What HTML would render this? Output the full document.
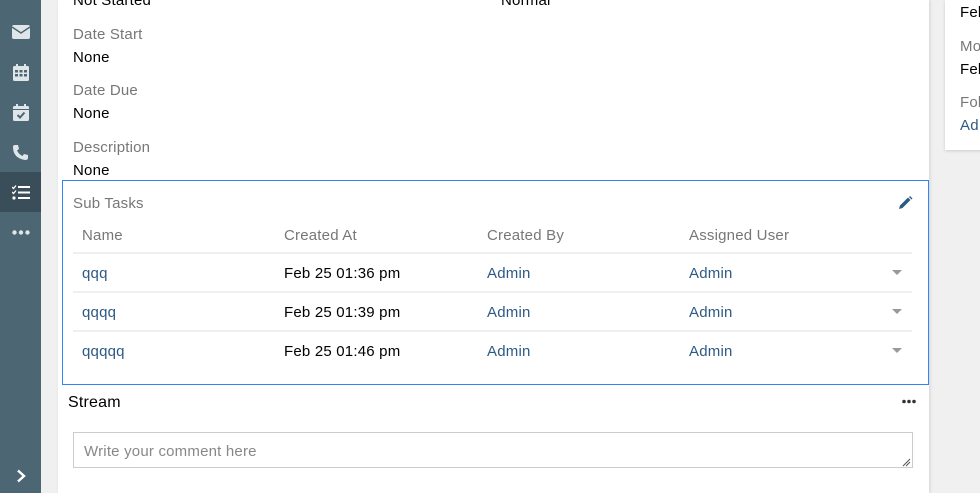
<!DOCTYPE html>
<html><head><style>
*{margin:0;padding:0;box-sizing:border-box}
html,body{width:980px;height:493px;overflow:hidden}
body{background:#f0f0f0;font-family:"Liberation Sans",sans-serif;font-size:15px;color:#000;position:relative;letter-spacing:0.2px}
.sb{position:absolute;left:0;top:0;width:41px;height:493px;background:#4d6674}
.sb .it{position:absolute;left:0;width:41px;height:40px;display:flex;align-items:center;justify-content:center}
.sb .act{background:#3a4e59}
.main{position:absolute;left:58px;top:0;width:871px;height:493px;background:#fff;box-shadow:1px 0 3px rgba(0,0,0,.12)}
.rp{position:absolute;left:945px;top:0;width:40px;height:150px;background:#fff;box-shadow:0 1px 3px rgba(0,0,0,.15)}
.t{position:absolute;white-space:nowrap}
.lbl{color:#777}
.lnk{color:#2d5a85}
.box{position:absolute;left:62px;top:180px;width:867px;height:205px;border:1.5px solid #2f86f2}
.line{position:absolute;left:73px;width:839px;height:2px;background:#eef0f0}
.car{position:absolute;left:892px;width:0;height:0;border-left:5px solid transparent;border-right:5px solid transparent;border-top:5px solid #999}
</style></head><body>
<div class="sb">
 <div class="it" style="top:12px"><svg width="18" height="14" viewBox="0 0 18 14"><rect width="18" height="14" rx="2" fill="#dfe6ea"/><path d="M0 2 L9 8 L18 2" stroke="#4d6674" stroke-width="1.5" fill="none"/></svg></div>
 <div class="it" style="top:52px"><svg width="16" height="17" viewBox="0 0 16 17"><rect x="0" y="2" width="16" height="15" rx="1.5" fill="#dfe6ea"/><rect x="3" y="0" width="2" height="4" fill="#dfe6ea"/><rect x="11" y="0" width="2" height="4" fill="#dfe6ea"/><g fill="#4d6674"><rect x="2" y="6" width="3" height="2.5"/><rect x="6.5" y="6" width="3" height="2.5"/><rect x="11" y="6" width="3" height="2.5"/><rect x="2" y="10" width="3" height="2.5"/><rect x="6.5" y="10" width="3" height="2.5"/><rect x="11" y="10" width="3" height="2.5"/></g></svg></div>
 <div class="it" style="top:92px"><svg width="16" height="17" viewBox="0 0 16 17"><rect x="0" y="2" width="16" height="15" rx="1.5" fill="#dfe6ea"/><rect x="3" y="0" width="2" height="4" fill="#dfe6ea"/><rect x="11" y="0" width="2" height="4" fill="#dfe6ea"/><rect x="0" y="5" width="16" height="1" fill="#4d6674"/><path d="M4.5 11 L7 13.5 L11.5 8.5" stroke="#4d6674" stroke-width="2" fill="none"/></svg></div>
 <div class="it" style="top:132px"><svg width="17" height="17" viewBox="0 0 17 17"><path d="M3 1 L6 1 L7 5 L5 6.5 Q7 10.5 10.5 12 L12 10 L16 11 L16 14 Q16 16 13 16 Q1 14 1 3 Q1 1 3 1Z" fill="#dfe6ea"/></svg></div>
 <div class="it act" style="top:172px"><svg width="18" height="15" viewBox="0 0 18 15"><g fill="#fff"><path d="M0 2 L1.5 3.5 L4 0.5" stroke="#fff" stroke-width="1.3" fill="none"/><path d="M0 7 L1.5 8.5 L4 5.5" stroke="#fff" stroke-width="1.3" fill="none"/><circle cx="2" cy="13" r="1.6"/><rect x="6" y="1" width="12" height="2"/><rect x="6" y="6.5" width="12" height="2"/><rect x="6" y="12" width="12" height="2"/></g></svg></div>
 <div class="it" style="top:212px"><svg width="18" height="5"><circle cx="2.5" cy="2.5" r="2.2" fill="#dfe6ea"/><circle cx="9" cy="2.5" r="2.2" fill="#dfe6ea"/><circle cx="15.5" cy="2.5" r="2.2" fill="#dfe6ea"/></svg></div>
 <div class="it" style="top:456px"><svg width="10" height="14"><path d="M2 1.5 L8 7 L2 12.5" stroke="#fff" stroke-width="2.4" fill="none"/></svg></div>
</div>
<div class="main"></div>
<div class="rp"></div>
<div class="t" style="left:960px;top:4px">Feb</div>
<div class="t lbl" style="left:960px;top:38px">Mo</div>
<div class="t" style="left:960px;top:61px">Feb</div>
<div class="t lbl" style="left:960px;top:94px">Fol</div>
<div class="t lnk" style="left:960px;top:117px">Ad</div>

<div class="t" style="left:73px;top:-8px">Not Started</div>
<div class="t" style="left:501px;top:-8px">Normal</div>
<div class="t lbl" style="left:73px;top:26px">Date Start</div>
<div class="t" style="left:73px;top:49px">None</div>
<div class="t lbl" style="left:73px;top:82px">Date Due</div>
<div class="t" style="left:73px;top:105px">None</div>
<div class="t lbl" style="left:73px;top:139px">Description</div>
<div class="t" style="left:73px;top:162px">None</div>

<div class="box"></div>
<div class="t lbl" style="left:73px;top:195px">Sub Tasks</div>
<svg style="position:absolute;left:898px;top:196px" width="15" height="14" viewBox="0 0 15 14"><path d="M1 13 L2 9.5 L10 1.5 L12.5 4 L4.5 12 Z" fill="#2d5a85"/><path d="M11 1 L12 0 L14.5 2.5 L13.5 3.5Z" fill="#2d5a85"/></svg>
<div class="t lbl" style="left:82px;top:227px">Name</div>
<div class="t lbl" style="left:284px;top:227px">Created At</div>
<div class="t lbl" style="left:487px;top:227px">Created By</div>
<div class="t lbl" style="left:689px;top:227px">Assigned User</div>
<div class="line" style="top:252px"></div>
<div class="line" style="top:291px"></div>
<div class="line" style="top:330px"></div>

<div class="t lnk" style="left:82px;top:265px">qqq</div>
<div class="t" style="left:284px;top:265px">Feb 25 01:36 pm</div>
<div class="t lnk" style="left:487px;top:265px">Admin</div>
<div class="t lnk" style="left:689px;top:265px">Admin</div>
<div class="car" style="top:270px"></div>

<div class="t lnk" style="left:82px;top:304px">qqqq</div>
<div class="t" style="left:284px;top:304px">Feb 25 01:39 pm</div>
<div class="t lnk" style="left:487px;top:304px">Admin</div>
<div class="t lnk" style="left:689px;top:304px">Admin</div>
<div class="car" style="top:309px"></div>

<div class="t lnk" style="left:82px;top:343px">qqqqq</div>
<div class="t" style="left:284px;top:343px">Feb 25 01:46 pm</div>
<div class="t lnk" style="left:487px;top:343px">Admin</div>
<div class="t lnk" style="left:689px;top:343px">Admin</div>
<div class="car" style="top:348px"></div>

<div class="t" style="left:68px;top:394px;font-size:16px">Stream</div>
<svg style="position:absolute;left:902px;top:399px" width="14" height="5"><circle cx="2" cy="2.5" r="1.8" fill="#333"/><circle cx="7" cy="2.5" r="1.8" fill="#333"/><circle cx="12" cy="2.5" r="1.8" fill="#333"/></svg>
<div style="position:absolute;left:73px;top:432px;width:840px;height:36px;border:1px solid #ccc"></div>
<div class="t" style="left:84px;top:443px;color:#888">Write your comment here</div>
<svg style="position:absolute;left:902px;top:458px" width="9" height="9"><path d="M1 8 L8 1 M4 8 L8 4" stroke="#555" stroke-width="1"/></svg>
</body></html>
